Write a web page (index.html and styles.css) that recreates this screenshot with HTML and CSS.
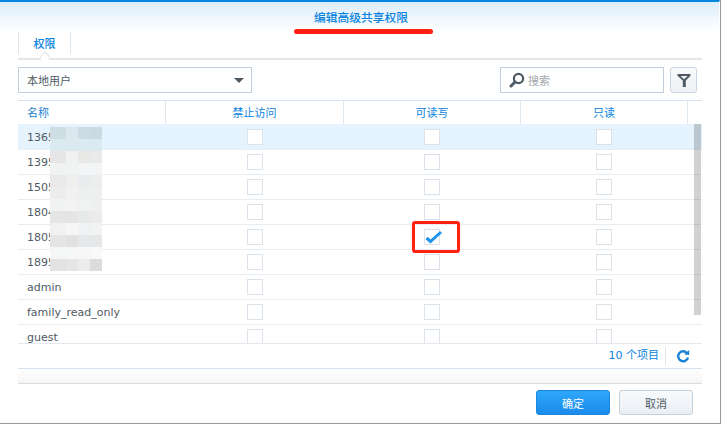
FILE: index.html
```html
<!DOCTYPE html>
<html lang="zh">
<head>
<meta charset="utf-8">
<title>编辑高级共享权限</title>
<link rel="stylesheet" href="styles.css">
</head>
<body>
<div class="window">
  <header class="head"><h1 class="title">编辑高级共享权限</h1><span class="underline"></span></header>
  <main class="content">
    <nav class="tabs"><span class="tab">权限</span></nav>
    <div class="toolbar">
      <div class="select"><span>本地用户</span><i class="caret"></i></div>
      <div class="search">
        <svg class="search-icon" width="16" height="16" viewBox="0 0 16 16"><circle cx="9.5" cy="6.5" r="4.6" fill="none" stroke="#4e5a63" stroke-width="2.2"/><path d="M6 10 2 14" stroke="#4e5a63" stroke-width="3" stroke-linecap="round"/></svg>
        <span>搜索</span>
      </div>
      <button class="filter"><svg width="16" height="16" viewBox="0 0 16 16"><path d="M1.5 2h13v1.8L9.8 8.6V15H6.8V8.6L1.5 3.8Z" fill="#4e5a63"/><path d="M4.6 4h7l-3.5 3.3Z" fill="#f0f4f8"/></svg></button>
    </div>
    <section class="grid">
      <div class="row header"><span>名称</span><span>禁止访问</span><span>可读写</span><span>只读</span><span></span></div>
      <div class="body">
        <div class="row sel"><span>1365</span><span><i class="box"></i></span><span class="shift"><i class="box"></i></span><span class="shift"><i class="box"></i></span></div>
        <div class="row"><span>1395</span><span><i class="box"></i></span><span class="shift"><i class="box"></i></span><span class="shift"><i class="box"></i></span></div>
        <div class="row"><span>1505</span><span><i class="box"></i></span><span class="shift"><i class="box"></i></span><span class="shift"><i class="box"></i></span></div>
        <div class="row"><span>1804</span><span><i class="box"></i></span><span class="shift"><i class="box"></i></span><span class="shift"><i class="box"></i></span></div>
        <div class="row"><span>1805</span><span><i class="box"></i></span><span class="shift"><i class="box"><svg class="check" width="19" height="16" viewBox="0 0 19 16"><path d="M2.5 9 6.5 12.5 17 3" fill="none" stroke="#1a94ee" stroke-width="3"/></svg></i></span><span class="shift"><i class="box"></i></span></div>
        <div class="row"><span>1895</span><span><i class="box"></i></span><span class="shift"><i class="box"></i></span><span class="shift"><i class="box"></i></span></div>
        <div class="row"><span>admin</span><span><i class="box"></i></span><span class="shift"><i class="box"></i></span><span class="shift"><i class="box"></i></span></div>
        <div class="row"><span>family_read_only</span><span><i class="box"></i></span><span class="shift"><i class="box"></i></span><span class="shift"><i class="box"></i></span></div>
        <div class="row"><span>guest</span><span><i class="box"></i></span><span class="shift"><i class="box"></i></span><span class="shift"><i class="box"></i></span></div>
        <div class="scrollbar"></div>
        <svg class="mosaic" width="52" height="144" viewBox="0 0 52 144" shape-rendering="crispEdges">
          <g><rect x="0" y="0" width="16" height="12" fill="#cfdde5"/><rect x="16" y="0" width="12" height="12" fill="#dbe8f0"/><rect x="28" y="0" width="12" height="12" fill="#cddbe4"/><rect x="40" y="0" width="12" height="12" fill="#cbd9e2"/></g>
          <g><rect x="0" y="12" width="52" height="12" fill="#dbe9f1"/></g>
          <g><rect x="0" y="24" width="16" height="12" fill="#e6e6e6"/><rect x="16" y="24" width="12" height="12" fill="#f0f1f1"/><rect x="28" y="24" width="12" height="12" fill="#e8e8e7"/><rect x="40" y="24" width="12" height="12" fill="#e9eaeb"/></g>
          <g><rect x="0" y="36" width="28" height="12" fill="#f1f2f2"/><rect x="28" y="36" width="24" height="12" fill="#f3f4f5"/></g>
          <g><rect x="0" y="48" width="16" height="12" fill="#e9e9e9"/><rect x="16" y="48" width="12" height="12" fill="#efefed"/><rect x="28" y="48" width="12" height="12" fill="#e9ecee"/><rect x="40" y="48" width="12" height="12" fill="#eceeee"/></g>
          <g><rect x="0" y="60" width="16" height="12" fill="#ededed"/><rect x="16" y="60" width="12" height="12" fill="#f1f1ef"/><rect x="28" y="60" width="24" height="12" fill="#eef0f0"/></g>
          <g><rect x="0" y="72" width="16" height="12" fill="#f1f2f2"/><rect x="16" y="72" width="12" height="12" fill="#f3f3f3"/><rect x="28" y="72" width="12" height="12" fill="#f0f1f1"/><rect x="40" y="72" width="12" height="12" fill="#eeefef"/></g>
          <g><rect x="0" y="84" width="28" height="12" fill="#e5e5e5"/><rect x="28" y="84" width="12" height="12" fill="#e8e9e9"/><rect x="40" y="84" width="12" height="12" fill="#ebebeb"/></g>
          <g><rect x="0" y="96" width="16" height="12" fill="#f1f1f1"/><rect x="16" y="96" width="12" height="12" fill="#f6f6f6"/><rect x="28" y="96" width="12" height="12" fill="#f0f1f2"/><rect x="40" y="96" width="12" height="12" fill="#f2f3f3"/></g>
          <g><rect x="0" y="108" width="16" height="12" fill="#e5e5e5"/><rect x="16" y="108" width="12" height="12" fill="#e1e1e2"/><rect x="28" y="108" width="12" height="12" fill="#e6e7e8"/><rect x="40" y="108" width="12" height="12" fill="#e5e7e8"/></g>
          <g><rect x="0" y="120" width="28" height="12" fill="#f5f6f6"/><rect x="28" y="120" width="12" height="12" fill="#f6f6f6"/><rect x="40" y="120" width="12" height="12" fill="#f7f8f8"/></g>
          <g><rect x="0" y="132" width="16" height="12" fill="#e3e3e3"/><rect x="16" y="132" width="12" height="12" fill="#e5e6e6"/><rect x="28" y="132" width="12" height="12" fill="#ececec"/><rect x="40" y="132" width="12" height="12" fill="#dcdcdc"/></g>
        </svg>
      </div>
      <div class="pager">
        <span class="count">10 个项目</span>
        <svg class="refresh" width="14" height="14" viewBox="0 0 14 14"><path d="M11.2 4.2A5 5 0 1 0 12 8.6" fill="none" stroke="#1a83d8" stroke-width="2.4"/><path d="M8.2 5.6 13.2 6V1Z" fill="#1a83d8"/></svg>
      </div>
    </section>
    <div class="shade"></div>
  </main>
  <footer class="actions">
    <button class="btn primary">确定</button>
    <button class="btn">取消</button>
  </footer>
  <span class="callout"></span>
</div>
</body>
</html>
```

FILE: styles.css
```css
* { box-sizing: border-box; }
html, body { margin: 0; height: 100%; }
body {
  width: 721px;
  height: 424px;
  overflow: hidden;
  background: #9a9a9a;
  font-family: "DejaVu Sans", "Noto Sans CJK SC", sans-serif;
  font-size: 11px;
  color: #505a64;
}
.window {
  position: relative;
  width: 720px;
  height: 423px;
  background: #fff;
  border-top: 2px solid #0686e0;
  display: flex;
  flex-direction: column;
  border-right: 1px solid #fff;
}
.head {
  position: relative;
  height: 30px;
  flex: none;
  background: linear-gradient(#dcedfb, #ffffff);
  text-align: center;
}
.title {
  margin: 0;
  padding: 7px 0 0 3px;
  font: 500 11.75px/16px "Noto Sans CJK SC", sans-serif;
  color: #0a84e0;
}
.underline {
  position: absolute;
  left: 294px;
  top: 27px;
  width: 139px;
  height: 5px;
  border-radius: 3px;
  background: #ff2012;
}
.content {
  flex: none;
  width: 702px;
  padding-left: 18px;
}
.tabs {
  position: relative;
  height: 28px;
  border-bottom: 2px solid #e6e6e6;
}
.tabs::after {
  content: "";
  position: absolute;
  left: 23px;
  bottom: -3px;
  width: 7px;
  height: 7px;
  transform: rotate(45deg);
  background: #fff;
  border-left: 1px solid #e6e6e6;
  border-top: 1px solid #e6e6e6;
}
.tab {
  display: block;
  width: 53px;
  height: 22px;
  border-left: 1px solid #dbe5ee;
  border-right: 1px solid #dbe5ee;
  text-align: center;
  font: 500 11px/22px "Noto Sans CJK SC", sans-serif;
  color: #0a84e0;
}
.toolbar {
  display: flex;
  margin: 7px 5px 7px 0;
  height: 26px;
}
.select, .search {
  height: 26px;
  border: 1px solid #c3d0dc;
  display: flex;
  align-items: center;
  font: 11px "Noto Sans CJK SC", sans-serif;
}
.select {
  width: 234px;
  padding: 0 7px 0 8px;
  justify-content: space-between;
  color: #505a64;
}
.caret {
  width: 0;
  height: 0;
  border-left: 5px solid transparent;
  border-right: 5px solid transparent;
  border-top: 5px solid #4e5a63;
}
.search {
  width: 164px;
  margin-left: 248px;
  padding-left: 8px;
  gap: 3px;
  color: #a0a6ac;
}
.filter {
  width: 27px;
  height: 26px;
  margin-left: 6px;
  padding: 0;
  border: 1px solid #c9d6e2;
  border-radius: 3px;
  background: linear-gradient(#f8fafc, #eef2f6);
  display: flex;
  align-items: center;
  justify-content: center;
}
.grid {
  position: relative;
}
.row {
  display: grid;
  grid-template-columns: 148px 178px 177px 167px 14px;
  height: 25px;
  align-items: center;
  border-bottom: 1px solid #e8edf2;
}
.row > span {
  display: flex;
  justify-content: center;
  align-items: center;
}
.row > span:first-child {
  justify-content: flex-start;
  padding-left: 9px;
}
.row > .shift {
  padding-right: 2px;
}
.header {
  height: 24px;
  border-top: 1px solid #d5e2ee;
  border-bottom: 0;
  background: #fff;
  color: #0a84e0;
  font-family: "Noto Sans CJK SC", sans-serif;
}
.header > span {
  height: 23px;
  padding-bottom: 1px;
  border-right: 1px solid #dfe8f0;
}
.header > span:first-child { color: #1a7fd0; }
.header > span:last-child { border-right: 0; }
.sel {
  height: 26px;
  padding-top: 1px;
  background: #e4f3fd;
}
.body {
  position: relative;
  height: 220px;
  overflow: hidden;
  border-bottom: 1px solid #e4eaf0;
}
.box {
  position: relative;
  display: block;
  width: 16px;
  height: 16px;
  background: #fff;
  border: 1px solid #dbe2ea;
}
.check {
  position: absolute;
  left: -1px;
  top: -1px;
}
.scrollbar {
  position: absolute;
  right: 1px;
  top: 0;
  width: 7px;
  height: 191px;
  background: rgba(0, 0, 0, .18);
}
.mosaic {
  position: absolute;
  left: 32px;
  top: 3px;
}
.pager {
  height: 25px;
  border-bottom: 1px solid #d5e2ee;
  display: flex;
  align-items: center;
  justify-content: flex-end;
  padding-right: 12px;
  color: #0a84e0;
}
.count {
  padding-right: 6px;
  margin-right: 10px;
  border-right: 1px solid #dfe5ea;
  line-height: 18px;
}
.shade {
  height: 15px;
  background: linear-gradient(#ffffff, #f6f6f6);
  border-bottom: 1px solid #dcdcdc;
}
.actions {
  display: flex;
  justify-content: flex-end;
  gap: 9px;
  padding: 6px 26px 0 0;
}
.btn {
  width: 74px;
  height: 25px;
  padding: 0;
  border: 1px solid #c4d2de;
  border-radius: 3px;
  background: linear-gradient(#f8fafc, #e9eff5);
  font: 11px "Noto Sans CJK SC", sans-serif;
  color: #505a64;
}
.primary {
  border-color: #1a86dc;
  background: linear-gradient(#2fa8fb, #1a8bea);
  color: #fff;
}
.callout {
  position: absolute;
  left: 412px;
  top: 219px;
  width: 48px;
  height: 32px;
  border: 3px solid #ff2012;
  border-radius: 3px;
}
```
